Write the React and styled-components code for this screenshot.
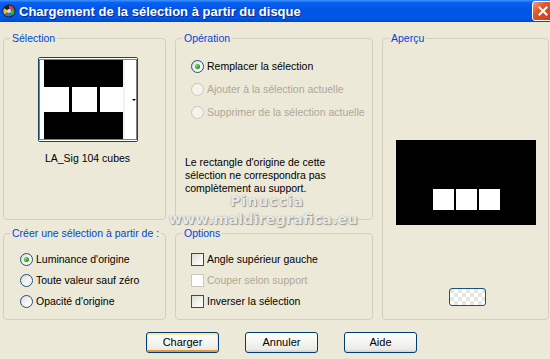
import React from "react";
import styled, { createGlobalStyle } from "styled-components";

const GlobalStyle = createGlobalStyle`
  html, body {
    margin: 0;
    padding: 0;
    background: #ECE9D8;
  }
  body {
    font-family: "Liberation Sans", Tahoma, Arial, sans-serif;
    font-size: 10.5px;
    color: #000;
  }
`;

const Window = styled.div`
  width: 550px;
  height: 359px;
  background: #ECE9D8;
  position: relative;
  overflow: hidden;
  display: flex;
  flex-direction: column;
`;

const TitleBar = styled.div`
  height: 22px;
  flex: none;
  display: flex;
  align-items: center;
  padding-left: 2px;
  background: linear-gradient(
    to bottom,
    #3D95FF 0%,
    #0A5FEF 12%,
    #0054E3 45%,
    #0058E8 80%,
    #0049D0 100%
  );
`;

const TitleText = styled.div`
  margin-left: 3px;
  color: #fff;
  font-family: "Liberation Sans", Arial, sans-serif;
  font-weight: bold;
  font-size: 13px;
  text-shadow: 1px 1px 0 #0A2A8A;
  white-space: nowrap;
`;

const CloseButton = styled.div`
  margin-left: auto;
  margin-right: -4px;
  width: 22px;
  height: 20px;
  box-sizing: border-box;
  border: 1px solid #fff;
  border-radius: 3px;
  background: linear-gradient(135deg, #F0A080 0%, #E2572C 35%, #C7391A 100%);
  display: flex;
  align-items: center;
  justify-content: center;
`;

const Body = styled.div`
  display: grid;
  grid-template-columns: 163px 198px 167px;
  grid-template-rows: 188px 93px;
  grid-template-areas:
    "sel op prev"
    "make opt prev";
  column-gap: 9px;
  row-gap: 7px;
  padding: 10px 0 0 3px;
`;

const Group = styled.fieldset`
  grid-area: ${(p) => p.$area};
  margin: 0;
  padding: 0;
  min-width: 0;
  border: 1px solid #D0D0BF;
  border-radius: 4px;
`;

const Legend = styled.legend`
  margin-left: 6px;
  padding: 0 2px;
  color: #0046D5;
  font-size: 10.5px;
  line-height: 13px;
  white-space: nowrap;
`;

const SelectionContent = styled.div`
  display: flex;
  flex-direction: column;
  align-items: center;
  padding: 12px 0 0 6px;
`;

const Thumb = styled.div`
  width: 100px;
  height: 85px;
  box-sizing: border-box;
  border: 1px solid #1C3F6E;
  border-radius: 2px;
  background: #fff;
  display: flex;
`;

const ThumbName = styled.div`
  margin-top: 10px;
  line-height: 13px;
`;

const OptionContent = styled.div`
  display: flex;
  flex-direction: column;
  padding: ${(p) => p.$top}px 0 0 9px;
`;

const ChoiceList = styled.div`
  display: flex;
  flex-direction: column;
  gap: ${(p) => p.$gap}px;
  padding-left: ${(p) => p.$indent}px;
`;

const Choice = styled.div`
  display: flex;
  align-items: center;
  gap: 3px;
  height: 13px;
  line-height: 13px;
  white-space: nowrap;
  color: ${(p) => (p.$disabled ? "#ACA899" : "#000")};
`;

const Radio = styled.span`
  flex: none;
  width: 13px;
  height: 13px;
  box-sizing: border-box;
  border-radius: 50%;
  border: 1px solid ${(p) => (p.$disabled ? "#CAC8BB" : "#1C5180")};
  background: ${(p) =>
    p.$disabled ? "#F4F3EC" : "linear-gradient(135deg, #DCDCD7 0%, #F6F6F3 60%, #FFFFFF 100%)"};
  display: flex;
  align-items: center;
  justify-content: center;

  &::after {
    content: "";
    display: ${(p) => (p.$checked ? "block" : "none")};
    width: 5px;
    height: 5px;
    border-radius: 50%;
    background: radial-gradient(circle at 35% 35%, #7CE27C 0%, #21A121 60%, #137013 100%);
  }
`;

const Check = styled.span`
  flex: none;
  width: 13px;
  height: 13px;
  box-sizing: border-box;
  border: 1px solid ${(p) => (p.$disabled ? "#CAC8BB" : "#1C5180")};
  background: ${(p) =>
    p.$disabled ? "#FFFFFF" : "linear-gradient(135deg, #DCDCD7 0%, #F2F2EE 55%, #FFFFFF 100%)"};
`;

const Note = styled.div`
  margin-top: 37px;
  line-height: 13px;
`;

const PreviewContent = styled.div`
  display: flex;
  flex-direction: column;
  align-items: center;
  padding-top: 95px;
`;

const PreviewPad = styled.div`
  width: 140px;
  height: 85px;
  background: #000;
  display: flex;
`;

const SmallButton = styled.div`
  margin-top: 63px;
  margin-left: 3px;
  width: 37px;
  height: 18px;
  box-sizing: border-box;
  border: 1px solid #1C5180;
  border-radius: 3px;
  background:
    repeating-conic-gradient(#FFFFFF 0% 25%, #E6E6E0 0% 50%) 0 0 / 8px 8px;
`;

const ButtonRow = styled.div`
  display: flex;
  gap: 26px;
  padding: 12px 0 0 146px;
`;

const Button = styled.div`
  width: 73px;
  height: 21px;
  box-sizing: border-box;
  border: 1px solid #003C74;
  border-radius: 3px;
  background: linear-gradient(to bottom, #FFFFFF 0%, #F4F4F0 50%, #ECEBE6 85%, #D6D0C5 100%);
  box-shadow: ${(p) =>
    p.$default ? "inset 0 1px 0 1px #FFE7A2, inset 0 -1px 0 1px #E5973B" : "none"};
  display: flex;
  align-items: center;
  justify-content: center;
  line-height: 13px;
  font-size: 11px;
`;

const Watermark = styled.div`
  position: absolute;
  left: 168px;
  top: 192px;
  width: 190px;
  display: flex;
  flex-direction: column;
  align-items: center;
  font-family: "DejaVu Sans", sans-serif;
  font-weight: bold;
  color: rgba(246, 246, 244, 0.9);
  text-shadow: 0 0 1px #8A8A84, 1px 1px 1px #9A9A94;
  pointer-events: none;
`;

const WatermarkLine = styled.div`
  font-size: ${(p) => p.$size}px;
  letter-spacing: ${(p) => p.$spacing}px;
  line-height: ${(p) => p.$size + 4}px;
  margin-left: ${(p) => p.$shift}px;
`;

const AppIcon = () => (
  <svg width="14" height="14" viewBox="0 0 14 14">
    <circle cx="7" cy="7" r="6.5" fill="#1A1A22" />
    <path d="M7 7 L7 1.5 A5.5 5.5 0 0 1 12.3 5.5 Z" fill="#E04040" />
    <path d="M7 7 L12.3 5.5 A5.5 5.5 0 0 1 10 11.6 Z" fill="#40B040" />
    <path d="M7 7 L10 11.6 A5.5 5.5 0 0 1 2.5 10.5 Z" fill="#3A6FE0" />
    <path d="M7 7 L2.5 10.5 A5.5 5.5 0 0 1 2.2 4.2 Z" fill="#E0C030" />
    <circle cx="7" cy="7" r="2" fill="#D8D8E0" />
  </svg>
);

const CloseIcon = () => (
  <svg width="10" height="10" viewBox="0 0 10 10">
    <path d="M1.5 1.5 L8.5 8.5 M8.5 1.5 L1.5 8.5" stroke="#fff" strokeWidth="2" strokeLinecap="square" />
  </svg>
);

const ThumbImage = () => (
  <svg width="98" height="83" viewBox="0 0 98 83">
    <rect x="0" y="0" width="98" height="83" fill="#fff" />
    <rect x="5" y="2" width="79" height="27" fill="#000" />
    <rect x="5" y="54" width="79" height="27" fill="#000" />
    <rect x="30" y="29" width="3" height="25" fill="#000" />
    <rect x="58" y="29" width="3" height="25" fill="#000" />
    <line x1="85" y1="2" x2="85" y2="81" stroke="#E4E4E4" />
    <rect
      x="0.5"
      y="1.5"
      width="97"
      height="80"
      fill="none"
      stroke="#000"
      strokeDasharray="1 1"
    />
    <path d="M93 41 L97 41 L95 43 Z" fill="#000" />
  </svg>
);

const PreviewImage = () => (
  <svg width="140" height="85" viewBox="0 0 140 85">
    <rect x="0" y="0" width="140" height="85" fill="#000" />
    <rect x="37" y="49" width="21" height="21" fill="#fff" />
    <rect x="60" y="49" width="21" height="21" fill="#fff" />
    <rect x="83" y="49" width="21" height="21" fill="#fff" />
  </svg>
);

export default function App() {
  return (
    <>
      <GlobalStyle />
      <Window>
        <TitleBar>
          <AppIcon />
          <TitleText>Chargement de la sélection à partir du disque</TitleText>
          <CloseButton>
            <CloseIcon />
          </CloseButton>
        </TitleBar>

        <Body>
          <Group $area="sel">
            <Legend>Sélection</Legend>
            <SelectionContent>
              <Thumb>
                <ThumbImage />
              </Thumb>
              <ThumbName>LA_Sig 104 cubes</ThumbName>
            </SelectionContent>
          </Group>

          <Group $area="op">
            <Legend>Opération</Legend>
            <OptionContent $top={15}>
              <ChoiceList $gap={10} $indent={6}>
                <Choice>
                  <Radio $checked />
                  Remplacer la sélection
                </Choice>
                <Choice $disabled>
                  <Radio $disabled />
                  Ajouter à la sélection actuelle
                </Choice>
                <Choice $disabled>
                  <Radio $disabled />
                  Supprimer de la sélection actuelle
                </Choice>
              </ChoiceList>
              <Note>
                Le rectangle d'origine de cette
                <br />
                sélection ne correspondra pas
                <br />
                complètement au support.
              </Note>
            </OptionContent>
          </Group>

          <Group $area="prev">
            <Legend>Aperçu</Legend>
            <PreviewContent>
              <PreviewPad>
                <PreviewImage />
              </PreviewPad>
              <SmallButton />
            </PreviewContent>
          </Group>

          <Group $area="make">
            <Legend>Créer une sélection à partir de :</Legend>
            <OptionContent $top={13}>
              <ChoiceList $gap={8} $indent={7}>
                <Choice>
                  <Radio $checked />
                  Luminance d'origine
                </Choice>
                <Choice>
                  <Radio />
                  Toute valeur sauf zéro
                </Choice>
                <Choice>
                  <Radio />
                  Opacité d'origine
                </Choice>
              </ChoiceList>
            </OptionContent>
          </Group>

          <Group $area="opt">
            <Legend>Options</Legend>
            <OptionContent $top={13}>
              <ChoiceList $gap={8} $indent={6}>
                <Choice>
                  <Check />
                  Angle supérieur gauche
                </Choice>
                <Choice $disabled>
                  <Check $disabled />
                  Couper selon support
                </Choice>
                <Choice>
                  <Check />
                  Inverser la sélection
                </Choice>
              </ChoiceList>
            </OptionContent>
          </Group>
        </Body>

        <ButtonRow>
          <Button $default>Charger</Button>
          <Button>Annuler</Button>
          <Button>Aide</Button>
        </ButtonRow>

        <Watermark>
          <WatermarkLine $size={14} $spacing={1} $shift={8}>Pinuccia</WatermarkLine>
          <WatermarkLine $size={14.5} $spacing={0} $shift={0}>www.maldiregrafica.eu</WatermarkLine>
        </Watermark>
      </Window>
    </>
  );
}
